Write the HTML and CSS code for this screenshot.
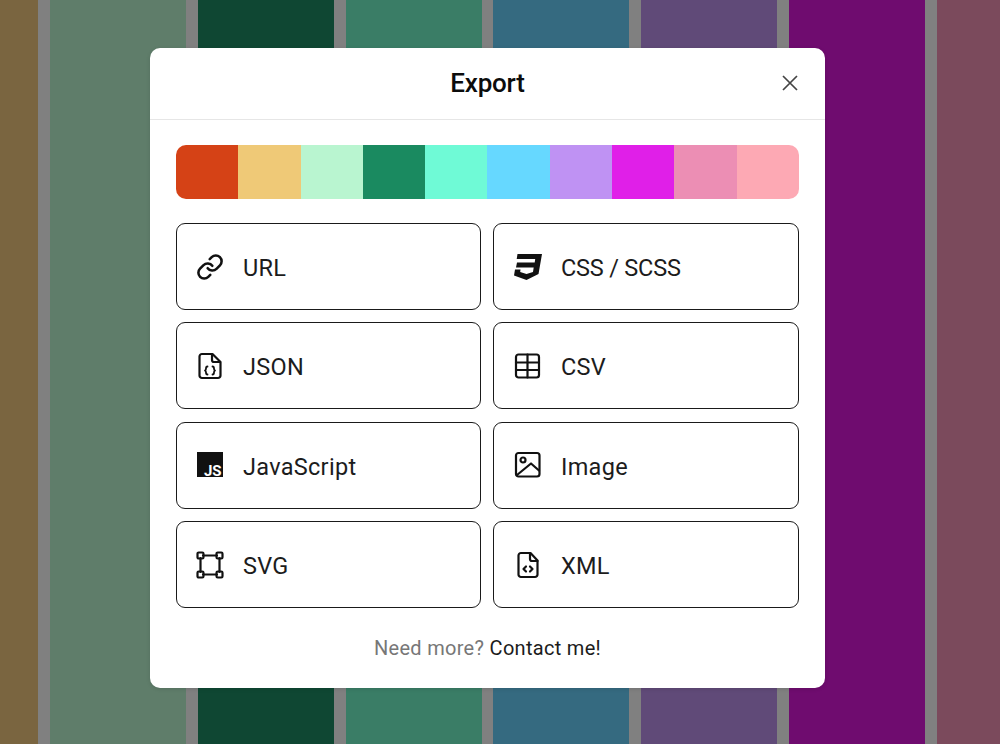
FILE: index.html
```html
<!DOCTYPE html>
<html lang="en">
<head>
<meta charset="utf-8">
<title>Export</title>
<link rel="stylesheet" href="styles.css">
</head>
<body>
<div class="stage">
  <div class="backdrop">
    <div class="stripe s0"></div>
    <div class="stripe s1"></div>
    <div class="stripe s2"></div>
    <div class="stripe s3"></div>
    <div class="stripe s4"></div>
    <div class="stripe s5"></div>
    <div class="stripe s6"></div>
    <div class="stripe s7"></div>
  </div>
  <section class="modal">
    <header class="modal-head">
      <h1 class="title">Export</h1>
      <button class="close" aria-label="Close">
        <svg viewBox="0 0 18 18" width="18" height="18"><path d="M2 2l14 14M16 2L2 16"/></svg>
      </button>
    </header>
    <div class="modal-body">
      <div class="palette">
        <span class="sw c0"></span><span class="sw c1"></span><span class="sw c2"></span><span class="sw c3"></span><span class="sw c4"></span><span class="sw c5"></span><span class="sw c6"></span><span class="sw c7"></span><span class="sw c8"></span><span class="sw c9"></span>
      </div>
      <div class="options">
        <a class="option"><svg class="icon" viewBox="0 0 24 24"><path d="M10 13a5 5 0 0 0 7.54.54l3-3a5 5 0 0 0-7.07-7.07l-1.72 1.71"/><path d="M14 11a5 5 0 0 0-7.54-.54l-3 3a5 5 0 0 0 7.07 7.07l1.71-1.71"/></svg><span class="label">URL</span></a>
        <a class="option"><svg class="icon" viewBox="0 0 28 28"><path class="solid" d="M3.500 1H28L24.500 21 12.500 27 0 22.500 1 16.500H6.500L6.200 19 12.500 21 19 19 19.700 14.500H2L3 9.500H20.700L21.200 6H2.700Z"/></svg><span class="label tight">CSS / SCSS</span></a>
        <a class="option"><svg class="icon" viewBox="0 0 28 28"><path d="M16.500 2H6a2.500 2.500 0 0 0-2.500 2.500v19A2.500 2.500 0 0 0 6 26h16a2.500 2.500 0 0 0 2.500-2.500V10z"/><path d="M16 2.500V8a2 2 0 0 0 2 2h6"/><path class="fine" d="M11.500 14.500c-1.500 0-1.500 1-1.500 2s0 1.500-1 2c1 .5 1 1 1 2s0 2 1.500 2M16.500 14.500c1.500 0 1.500 1 1.500 2s0 1.500 1 2c-1 .5-1 1-1 2s0 2-1.500 2"/></svg><span class="label">JSON</span></a>
        <a class="option"><svg class="icon" viewBox="0 0 28 28"><rect x="2" y="2.500" width="23" height="23" rx="2.500"/><path d="M2 10.500h23M2 18h23M13.500 2.500v23"/></svg><span class="label">CSV</span></a>
        <a class="option"><svg class="icon" viewBox="0 0 28 28"><rect class="solid" x="1" y="1" width="26" height="25"/><text class="js" x="25.500" y="24.500">JS</text></svg><span class="label">JavaScript</span></a>
        <a class="option"><svg class="icon" viewBox="0 0 28 28"><rect x="2" y="2" width="23.500" height="23.500" rx="2.500"/><circle cx="9" cy="9" r="2.500"/><path d="M3 24 17 12.500l8 7"/></svg><span class="label">Image</span></a>
        <a class="option"><svg class="icon" viewBox="0 0 28 28"><path d="M4.500 7v14M23.500 7v14M7 4.500h14M7 23.500h14"/><rect x="1.500" y="1.500" width="6" height="6" rx="1.200"/><rect x="20.500" y="1.500" width="6" height="6" rx="1.200"/><rect x="1.500" y="20.500" width="6" height="6" rx="1.200"/><rect x="20.500" y="20.500" width="6" height="6" rx="1.200"/></svg><span class="label">SVG</span></a>
        <a class="option"><svg class="icon" viewBox="0 0 28 28"><path d="M16.500 2H7a2.500 2.500 0 0 0-2.500 2.500v19A2.500 2.500 0 0 0 7 26h14a2.500 2.500 0 0 0 2.500-2.500V9.500z"/><path d="M16 2.500V8a2 2 0 0 0 2 2h5.500"/><path d="M12 15.500 9.500 18l2.500 2.500M16 15.500l2.500 2.500-2.500 2.500"/></svg><span class="label">XML</span></a>
      </div>
      <p class="foot"><span class="muted">Need more?</span> Contact me!</p>
    </div>
  </section>
</div>
</body>
</html>
```
FILE: styles.css
```css
* { box-sizing: border-box; }
html, body { margin: 0; padding: 0; }
body { font-family: Roboto, "Liberation Sans", sans-serif; color: #111; background: #808080; }
.stage {
  position: relative;
  width: 1000px;
  height: 744px;
  overflow: hidden;
  padding: 48px 0 0 150px;
}
.backdrop {
  position: absolute;
  top: 0;
  bottom: 0;
  left: -97.800px;
  display: flex;
  gap: 11.800px;
}
.stripe { width: 136px; height: 100%; }
.s0 { background: #7a6540; }
.s1 { background: #5f7d6a; }
.s2 { background: #0f4733; }
.s3 { background: #3a7d66; }
.s4 { background: #356a80; }
.s5 { background: #604a78; }
.s6 { background: #6f0c6f; }
.s7 { background: #7b4a5c; }
.modal {
  position: relative;
  width: 675px;
  height: 640px;
  background: #fff;
  border-radius: 10px;
  box-shadow: 0 1px 4px rgba(0, 0, 0, .12);
}
.modal-head {
  position: relative;
  height: 72px;
  border-bottom: 1px solid #e6e6e6;
  display: flex;
  align-items: center;
  justify-content: center;
}
.title { margin: 0 0 2px; font-size: 26px; font-weight: 500; line-height: 30px; letter-spacing: -.2px; color: #0c0c0c; }
.close {
  position: absolute;
  right: 26px;
  top: 26px;
  width: 18px;
  height: 18px;
  padding: 0;
  border: 0;
  background: none;
  display: block;
}
.close svg { display: block; fill: none; stroke: #444; stroke-width: 1.700; }
.modal-body { padding: 25px 26px 0; }
.palette { display: flex; height: 54px; border-radius: 10px; overflow: hidden; }
.sw { flex: 1; }
.c0 { background: #d54216; }
.c1 { background: #efc977; }
.c2 { background: #b9f5d0; }
.c3 { background: #1a8a60; }
.c4 { background: #6ffad6; }
.c5 { background: #66d8ff; }
.c6 { background: #bf92f3; }
.c7 { background: #e01fe8; }
.c8 { background: #ec8eb4; }
.c9 { background: #fda9b4; }
.options {
  margin-top: 24px;
  display: grid;
  grid-template-columns: 305px 306px;
  grid-auto-rows: 87px;
  gap: 12.400px 12px;
}
.option {
  display: flex;
  align-items: center;
  gap: 19px;
  padding-left: 19px;
  border: 1px solid #1a1a1a;
  border-radius: 9px;
  font-size: 23.500px;
  letter-spacing: .3px;
  color: #1c1c1c;
}
.option:nth-child(even) { padding-left: 20px; }
.label { padding-top: 2.500px; }
.tight { letter-spacing: -.2px; }
.icon { width: 28px; height: 28px; flex: none; fill: none; stroke: #111; stroke-width: 2.200; stroke-linecap: round; stroke-linejoin: round; }
.icon .solid { fill: #111; stroke: none; }
.icon .fine { stroke-width: 1.800; }
.js { fill: #fff; stroke: none; font-family: Roboto, sans-serif; font-weight: 700; font-size: 15px; text-anchor: end; letter-spacing: 0; }
.foot { margin: 28px 0 0; text-align: center; font-size: 20px; line-height: 24px; letter-spacing: .3px; color: #1c1c1c; }
.muted { color: #777; }
```
